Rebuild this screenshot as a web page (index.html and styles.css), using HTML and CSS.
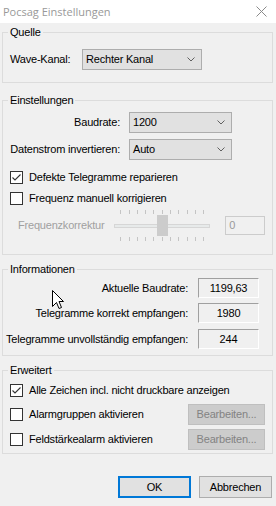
FILE: index.html
```html
<!DOCTYPE html>
<html lang="de">
<head>
  <meta charset="UTF-8" />
  <title>Pocsag Einstellungen</title>
  <link rel="stylesheet" href="styles.css">
</head>
<body>
  <div class="titlebar">
    <span class="title">Pocsag Einstellungen</span>
    <svg class="close" width="11" height="11" viewBox="0 0 11 11">
      <path d="M0.5 0.5 L10.5 10.5 M10.5 0.5 L0.5 10.5" stroke="#8a8a8a" stroke-width="1" fill="none" />
    </svg>
  </div>

  <div class="content">
    <fieldset class="group group-source">
      <legend>Quelle</legend>
      <div class="row">
        <span class="label label-wave">Wave-Kanal:</span>
        <div class="combo combo-wave">
          <span>Rechter Kanal</span>
          <svg width="8" height="5" viewBox="0 0 8 5"><path d="M0.5 0.5 L4 4 L7.5 0.5" stroke="#606060" fill="none" /></svg>
        </div>
      </div>
    </fieldset>

    <fieldset class="group group-settings">
      <legend>Einstellungen</legend>
      <div class="row">
        <span class="label label-settings">Baudrate:</span>
        <div class="combo combo-settings">
          <span>1200</span>
          <svg width="8" height="5" viewBox="0 0 8 5"><path d="M0.5 0.5 L4 4 L7.5 0.5" stroke="#606060" fill="none" /></svg>
        </div>
      </div>
      <div class="row row-invert">
        <span class="label label-settings">Datenstrom invertieren:</span>
        <div class="combo combo-settings">
          <span>Auto</span>
          <svg width="8" height="5" viewBox="0 0 8 5"><path d="M0.5 0.5 L4 4 L7.5 0.5" stroke="#606060" fill="none" /></svg>
        </div>
      </div>
      <label class="check check-repair">
        <svg width="13" height="13" viewBox="0 0 13 13">
          <rect x="0.5" y="0.5" width="12" height="12" fill="#fff" stroke="#333" />
          <path d="M2.5 6.5 L5 9 L10.5 3.5" stroke="#333" stroke-width="1.1" fill="none" />
        </svg>
        <span>Defekte Telegramme reparieren</span>
      </label>
      <label class="check check-freq">
        <svg width="13" height="13" viewBox="0 0 13 13">
          <rect x="0.5" y="0.5" width="12" height="12" fill="#fff" stroke="#333" />
        </svg>
        <span>Frequenz manuell korrigieren</span>
      </label>
      <div class="slider-row">
        <span class="disabled-label">Frequenzkorrektur</span>
        <div class="slider">
          <div class="ticks">
            <i></i><i></i><i></i><i></i><i></i><i></i><i></i><i></i><i></i><i></i><i></i>
          </div>
          <div class="track"></div>
          <div class="ticks ticks-bottom">
            <i></i><i></i><i></i><i></i><i></i><i></i><i></i><i></i><i></i><i></i><i></i>
          </div>
          <div class="thumb"></div>
        </div>
        <div class="textbox-disabled">0</div>
      </div>
    </fieldset>

    <fieldset class="group group-info">
      <legend>Informationen</legend>
      <div class="info-row">
        <span class="info-label">Aktuelle Baudrate:</span>
        <span class="value">1199,63</span>
      </div>
      <div class="info-row info-row-2">
        <span class="info-label">Telegramme korrekt empfangen:</span>
        <span class="value">1980</span>
      </div>
      <div class="info-row info-row-3">
        <span class="info-label">Telegramme unvollständig empfangen:</span>
        <span class="value">244</span>
      </div>
    </fieldset>

    <fieldset class="group group-extended">
      <legend>Erweitert</legend>
      <div class="ext-row ext-row-1">
        <label class="check">
          <svg width="13" height="13" viewBox="0 0 13 13">
            <rect x="0.5" y="0.5" width="12" height="12" fill="#fff" stroke="#333" />
            <path d="M2.5 6.5 L5 9 L10.5 3.5" stroke="#333" stroke-width="1.1" fill="none" />
          </svg>
          <span>Alle Zeichen incl. nicht druckbare anzeigen</span>
        </label>
      </div>
      <div class="ext-row ext-row-2">
        <label class="check">
          <svg width="13" height="13" viewBox="0 0 13 13">
            <rect x="0.5" y="0.5" width="12" height="12" fill="#fff" stroke="#333" />
          </svg>
          <span>Alarmgruppen aktivieren</span>
        </label>
        <button class="btn-disabled" disabled>Bearbeiten...</button>
      </div>
      <div class="ext-row ext-row-3">
        <label class="check">
          <svg width="13" height="13" viewBox="0 0 13 13">
            <rect x="0.5" y="0.5" width="12" height="12" fill="#fff" stroke="#333" />
          </svg>
          <span>Feldstärkealarm aktivieren</span>
        </label>
        <button class="btn-disabled" disabled>Bearbeiten...</button>
      </div>
    </fieldset>
  </div>

  <div class="footer">
    <button class="btn btn-default">OK</button>
    <button class="btn">Abbrechen</button>
  </div>

  <svg class="cursor" width="13" height="20" viewBox="0 0 13 20">
    <path d="M0.5 0.5 L0.5 16.5 L4.5 12.5 L7 18.5 L9.5 17.5 L7 11.5 L11.5 11.5 Z" fill="#fff" stroke="#000" stroke-width="1" stroke-linejoin="miter" />
  </svg>
</body>
</html>
```

FILE: styles.css
```css
body {
  margin: 0;
  width: 276px;
  height: 506px;
  position: relative;
  overflow: hidden;
  background-color: #f0f0f0;
  font-family: "Liberation Sans", Arial, sans-serif;
  font-size: 11px;
  line-height: 13px;
  letter-spacing: -0.2px;
  white-space: nowrap;
  color: #000;
}

.titlebar {
  height: 23px;
  background-color: #fff;
  display: flex;
  align-items: center;
  justify-content: space-between;
  padding: 0 9px 0 3px;
  box-sizing: border-box;
}

.title {
  font-family: "Open Sans", "Liberation Sans", sans-serif;
  font-size: 11px;
  letter-spacing: 0;
  color: #999;
}

.content {
  padding: 3px 3px 0 2px;
}

.group {
  margin: 0;
  padding: 0 7px;
  border: 1px solid #dcdcdc;
  min-width: 0;
}

.group legend {
  padding: 0 2px;
  margin-left: -2px;
  line-height: 13px;
}

.group-source {
  padding-top: 10px;
  padding-bottom: 12px;
}

.group-settings {
  margin-top: 11px;
  padding-top: 5px;
  padding-bottom: 13px;
}

.group-info {
  margin-top: 8px;
  padding-top: 2px;
  padding-bottom: 6px;
}

.group-extended {
  margin-top: 8px;
  padding-top: 0;
  padding-bottom: 3px;
}

.row {
  display: flex;
  align-items: center;
  height: 21px;
}

.row-invert {
  margin-top: 6px;
}

.label-wave {
  width: 72px;
}

.label-settings {
  display: flex;
  justify-content: flex-end;
  flex: none;
  width: 110px;
  margin-right: 9px;
}

.combo {
  height: 21px;
  box-sizing: border-box;
  border: 1px solid #adadad;
  background-color: #e1e1e1;
  display: flex;
  align-items: center;
  justify-content: space-between;
  padding: 0 6px 0 3px;
}

.combo-wave {
  width: 120px;
}

.combo-settings {
  width: 103px;
}

.check {
  display: flex;
  align-items: center;
  height: 13px;
}

.check svg {
  flex: none;
  margin-right: 6px;
}

.check-repair {
  margin-top: 11px;
}

.check-freq {
  margin-top: 8px;
}

.slider-row {
  display: flex;
  align-items: center;
  height: 32px;
  margin-top: 4px;
}

.disabled-label {
  width: 92px;
  margin-left: 8px;
  color: #a0a0a0;
}

.slider {
  position: relative;
  width: 106px;
  height: 32px;
  display: flex;
  flex-direction: column;
}

.ticks {
  display: flex;
  justify-content: space-between;
  height: 4px;
  margin: 1px 10px 0 11px;
}

.ticks i {
  width: 1px;
  background-color: #c4c4c4;
}

.ticks-bottom {
  margin-top: 9px;
}

.track {
  height: 4px;
  box-sizing: border-box;
  margin: 10px 4px 0 5px;
  border: 1px solid #d6d6d6;
  background-color: #e7eaea;
}

.thumb {
  position: absolute;
  left: 48px;
  top: 6px;
  width: 11px;
  height: 21px;
  background-color: #cccccc;
}

.textbox-disabled {
  align-self: flex-start;
  margin: 7px 0 0 11px;
  width: 40px;
  height: 19px;
  box-sizing: border-box;
  border: 1px solid #cccccc;
  padding: 2px 0 0 3px;
  color: #9a9a9a;
}

.info-row {
  display: flex;
  align-items: center;
  justify-content: flex-end;
  height: 20px;
  padding-right: 6px;
}

.info-row-2 {
  margin-top: 5px;
}

.info-row-3 {
  margin-top: 6px;
}

.info-label {
  margin-right: 10px;
}

.value {
  flex: none;
  width: 61px;
  height: 20px;
  box-sizing: border-box;
  border-top: 1px solid #a0a0a0;
  border-left: 1px solid #a0a0a0;
  border-right: 1px solid #fff;
  border-bottom: 1px solid #fff;
  display: flex;
  align-items: center;
  justify-content: center;
}

.ext-row {
  display: flex;
  align-items: center;
  justify-content: space-between;
  height: 21px;
}

.ext-row-1 {
  margin-top: 3px;
}

.ext-row-2 {
  margin-top: 3px;
}

.ext-row-3 {
  margin-top: 4px;
}

.btn-disabled {
  width: 77px;
  height: 21px;
  margin: 0;
  padding: 0;
  border: 1px solid #bfbfbf;
  background-color: #cccccc;
  color: #838383;
  font: inherit;
  letter-spacing: inherit;
}

.footer {
  display: flex;
  justify-content: flex-end;
  gap: 8px;
  margin-top: 22px;
  padding-right: 4px;
}

.btn {
  width: 73px;
  height: 22px;
  margin: 0;
  padding: 0;
  border: 1px solid #adadad;
  background-color: #e1e1e1;
  color: #000;
  font: inherit;
  letter-spacing: inherit;
}

.btn-default {
  border: 2px solid #0078d7;
}

.cursor {
  position: absolute;
  left: 52px;
  top: 290px;
}
```
